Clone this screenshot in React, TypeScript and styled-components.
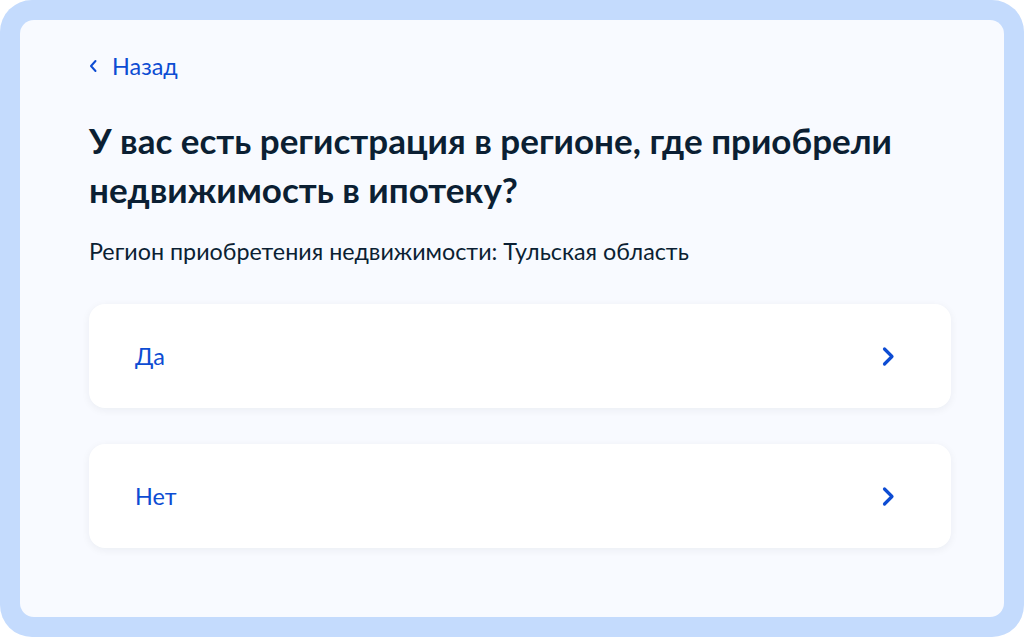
import styled, { createGlobalStyle } from 'styled-components';

const GlobalStyle = createGlobalStyle`
  html, body {
    margin: 0;
    padding: 0;
    background: #ffffff;
  }
  body {
    font-family: Lato, 'Noto Sans', sans-serif;
  }
`;

const options = ['Да', 'Нет'];

const Chevron = () => (
  <svg width="16" height="21" viewBox="0 0 16 21" fill="none">
    <path
      d="M3.5 3 L11 10.5 L3.5 18"
      stroke="#0d4cd3"
      strokeWidth="3.2"
      strokeLinecap="round"
      strokeLinejoin="round"
    />
  </svg>
);

export default function App() {
  return (
    <>
      <GlobalStyle />
      <Frame>
        <Panel>
          <BackLink href="#">
            <BackIcon>
              <svg width="9" height="14" viewBox="0 0 9 14" fill="none">
                <path
                  d="M6.5 2 L2 7 L6.5 12"
                  stroke="#0d4cd3"
                  strokeWidth="2"
                  strokeLinecap="round"
                  strokeLinejoin="round"
                />
              </svg>
            </BackIcon>
            Назад
          </BackLink>
          <Title>У вас есть регистрация в регионе, где приобрели недвижимость в ипотеку?</Title>
          <Subtitle>Регион приобретения недвижимости: Тульская область</Subtitle>
          <OptionList>
            {options.map((label) => (
              <OptionCard key={label}>
                <OptionLabel>{label}</OptionLabel>
                <Chevron />
              </OptionCard>
            ))}
          </OptionList>
        </Panel>
      </Frame>
    </>
  );
}

const Frame = styled.div`
  box-sizing: border-box;
  width: 1024px;
  height: 637px;
  padding: 20px;
  background: #c4dbfd;
  border-radius: 32px;
`;

const Panel = styled.div`
  box-sizing: border-box;
  height: 100%;
  background: #f8faff;
  border-radius: 14px;
  padding: 32px 53px 0 69px;
  display: flex;
  flex-direction: column;
`;

const BackLink = styled.a`
  display: flex;
  align-items: center;
  gap: 14px;
  font-size: 23.4px;
  line-height: 28px;
  color: #0d4cd3;
  text-decoration: none;
`;

const BackIcon = styled.span`
  display: flex;
  align-items: center;
`;

const Title = styled.h1`
  margin: 36px 0 0;
  font-size: 35px;
  line-height: 49px;
  font-weight: 700;
  color: #0b1f33;
  max-width: 840px;
`;

const Subtitle = styled.p`
  margin: 23px 0 0;
  font-size: 23.3px;
  line-height: 28px;
  color: #0b1f33;
`;

const OptionList = styled.div`
  display: flex;
  flex-direction: column;
  gap: 36px;
  margin-top: 39px;
`;

const OptionCard = styled.div`
  box-sizing: border-box;
  height: 104px;
  display: flex;
  align-items: center;
  justify-content: space-between;
  padding: 0 54px 0 46px;
  background: #ffffff;
  border-radius: 16px;
  box-shadow: 0 2px 8px rgba(11, 31, 51, 0.06);
  cursor: pointer;
`;

const OptionLabel = styled.span`
  font-size: 23.4px;
  line-height: 28px;
  color: #0d4cd3;
`;
